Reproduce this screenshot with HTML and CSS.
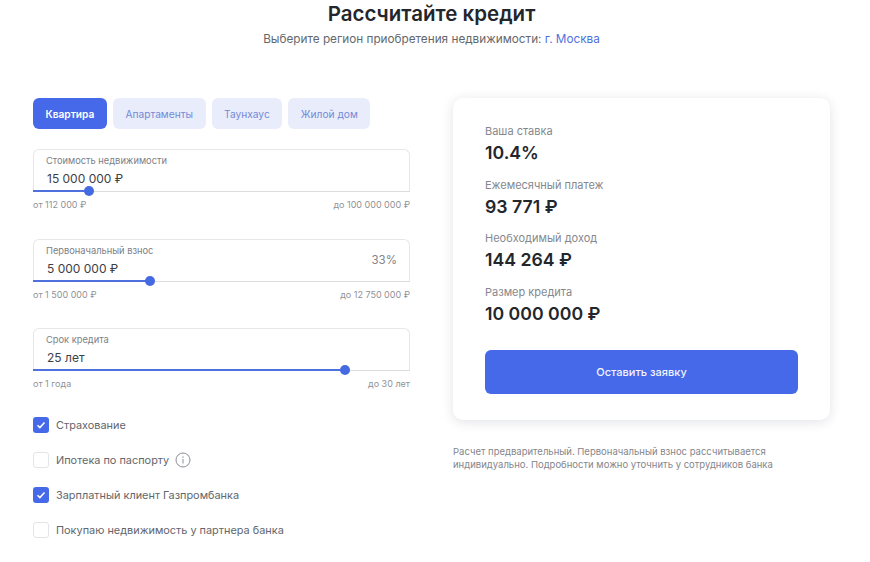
FILE: index.html
```html
<!DOCTYPE html>
<html lang="ru">
<head>
    <meta charset="UTF-8">
    <title>Рассчитайте кредит</title>
    <link rel="stylesheet" href="styles.css">
</head>
<body>
    <header class="head">
        <h1>Рассчитайте кредит</h1>
        <p class="region">Выберите регион приобретения недвижимости: <a href="#">г. Москва</a></p>
    </header>

    <main class="calc">
        <section class="form">
            <div class="tabs">
                <button class="tab active">Квартира</button>
                <button class="tab">Апартаменты</button>
                <button class="tab">Таунхаус</button>
                <button class="tab">Жилой дом</button>
            </div>

            <div class="field">
                <div class="box">
                    <div class="box-label">Стоимость недвижимости</div>
                    <div class="box-value">15 000 000 ₽</div>
                    <div class="track"><div class="fill" style="width: 56px"></div></div>
                </div>
                <div class="hints"><span>от 112 000 ₽</span><span>до 100 000 000 ₽</span></div>
            </div>

            <div class="field">
                <div class="box">
                    <div class="box-label">Первоначальный взнос</div>
                    <div class="box-value">5 000 000 ₽</div>
                    <span class="percent">33%</span>
                    <div class="track"><div class="fill" style="width: 117px"></div></div>
                </div>
                <div class="hints"><span>от 1 500 000 ₽</span><span>до 12 750 000 ₽</span></div>
            </div>

            <div class="field">
                <div class="box">
                    <div class="box-label">Срок кредита</div>
                    <div class="box-value">25 лет</div>
                    <div class="track"><div class="fill" style="width: 312px"></div></div>
                </div>
                <div class="hints"><span>от 1 года</span><span>до 30 лет</span></div>
            </div>

            <div class="checks">
                <label class="check">
                    <span class="mark on"><svg viewBox="0 0 16 16" width="16" height="16"><path d="M4.5 8.2l2.4 2.4 4.6-5" fill="none" stroke="#fff" stroke-width="1.5"/></svg></span>
                    Страхование
                </label>
                <label class="check">
                    <span class="mark"></span>
                    Ипотека по паспорту
                    <svg class="info" viewBox="0 0 16 16" width="16" height="16"><circle cx="8" cy="8" r="7" fill="none" stroke="#8b8f96" stroke-width="1"/><path d="M8 7v4.5" stroke="#8b8f96" stroke-width="1"/><circle cx="8" cy="5" r=".7" fill="#8b8f96"/></svg>
                </label>
                <label class="check">
                    <span class="mark on"><svg viewBox="0 0 16 16" width="16" height="16"><path d="M4.5 8.2l2.4 2.4 4.6-5" fill="none" stroke="#fff" stroke-width="1.5"/></svg></span>
                    Зарплатный клиент Газпромбанка
                </label>
                <label class="check">
                    <span class="mark"></span>
                    Покупаю недвижимость у партнера банка
                </label>
            </div>
        </section>

        <section class="side">
            <div class="card">
                <div class="stat">
                    <div class="stat-label">Ваша ставка</div>
                    <div class="stat-value">10.4%</div>
                </div>
                <div class="stat">
                    <div class="stat-label">Ежемесячный платеж</div>
                    <div class="stat-value">93 771 ₽</div>
                </div>
                <div class="stat">
                    <div class="stat-label">Необходимый доход</div>
                    <div class="stat-value">144 264 ₽</div>
                </div>
                <div class="stat">
                    <div class="stat-label">Размер кредита</div>
                    <div class="stat-value">10 000 000 ₽</div>
                </div>
                <button class="submit">Оставить заявку</button>
            </div>
            <p class="note">Расчет предварительный. Первоначальный взнос рассчитывается индивидуально. Подробности можно уточнить у сотрудников банка</p>
        </section>
    </main>
</body>
</html>
```

FILE: styles.css
```css
* {
    box-sizing: border-box;
}
body {
    margin: 0;
    background: #fff;
    color: #23262b;
    font-family: "Inter", "Noto Sans", sans-serif;
    overflow: hidden;
}

/* шапка */
.head {
    text-align: center;
    padding-right: 7px;
    margin-bottom: 51px;
}
h1 {
    margin: 0;
    font-size: 20.5px;
    line-height: 28px;
    font-weight: 600;
}
.region {
    margin: 3px 0 0;
    font-size: 11.75px;
    line-height: 16px;
    color: #63676d;
}
.region a {
    color: #4f71e0;
    text-decoration: none;
}

/* колонки */
.calc {
    display: flex;
    gap: 43px;
    padding: 0 33px;
}
.form,
.side {
    width: 377px;
}

/* табы */
.tabs {
    display: flex;
    gap: 6px;
    margin-bottom: 20px;
}
.tab {
    height: 31px;
    padding: 0 12.5px;
    border: 0;
    border-radius: 6px;
    background: #e9edfb;
    color: #7389d8;
    font: 400 10.2px "Inter", "Noto Sans", sans-serif;
}
.tab.active {
    background: #4569e8;
    color: #fff;
    font-weight: 600;
}

/* поля */
.field {
    height: 89.5px;
}
.box {
    position: relative;
    height: 43px;
    padding: 5px 12px 0;
    border: 1px solid #e6e7ea;
    border-bottom: 0;
    border-radius: 6px 6px 0 0;
}
.box-label {
    font-size: 9.3px;
    line-height: 12px;
    color: #7c8086;
}
.box-value {
    margin-top: 4px;
    margin-left: 1px;
    font-size: 12px;
    line-height: 16px;
    color: #3d4045;
}
.percent {
    position: absolute;
    right: 12px;
    top: 13px;
    font-size: 11.5px;
    color: #828489;
}
.track {
    position: absolute;
    left: -1px;
    right: -1px;
    bottom: 0;
    height: 1px;
    background: #dcdde0;
}
.fill {
    position: relative;
    height: 2px;
    margin-top: -1px;
    background: #4f71e0;
}
/* ползунок */
.fill::after {
    content: "";
    position: absolute;
    right: -5px;
    top: -4px;
    width: 10px;
    height: 10px;
    border-radius: 50%;
    background: #4569e0;
}
.hints {
    display: flex;
    justify-content: space-between;
    margin-top: 7px;
    font-size: 9px;
    line-height: 12px;
    color: #8f9297;
}

/* чекбоксы */
.checks {
    display: flex;
    flex-direction: column;
    gap: 19px;
    margin-top: -1px;
}
.check {
    display: flex;
    align-items: center;
    height: 16px;
    gap: 7px;
    font-size: 10.9px;
    color: #63666c;
}
.mark {
    width: 16px;
    height: 16px;
    border: 1px solid #e3e4e7;
    border-radius: 3px;
}
.mark.on {
    border: 0;
    background: #4569e8;
}
.mark svg {
    display: block;
}
.info {
    margin-left: -1px;
}

/* карточка */
.card {
    height: 322px;
    padding: 26px 32px 0;
    border-radius: 10px;
    background: #fff;
    box-shadow: 0 2px 12px rgba(30, 40, 70, 0.13);
}
.stat {
    height: 53.5px;
}
.stat-label {
    font-size: 11px;
    line-height: 14px;
    color: #85888e;
}
.stat-value {
    margin-top: 3px;
    font-size: 17.7px;
    line-height: 24px;
    font-weight: 600;
    color: #23262b;
}
.submit {
    display: block;
    width: 100%;
    height: 44px;
    margin-top: 12px;
    border: 0;
    border-radius: 6px;
    background: #4569e8;
    color: #f2f4fd;
    font: 500 11px "Inter", "Noto Sans", sans-serif;
}
.note {
    margin: 26px 0 0;
    font-size: 9.5px;
    line-height: 12.5px;
    color: #83868c;
}
```
